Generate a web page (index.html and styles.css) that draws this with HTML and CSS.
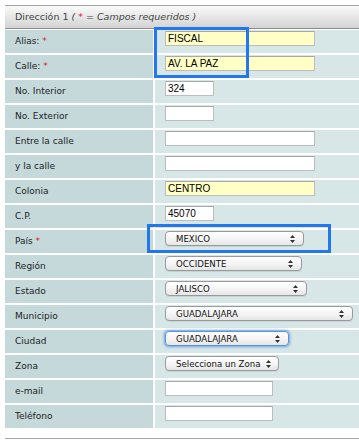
FILE: index.html
```html
<!DOCTYPE html>
<html lang="es">
<head>
  <meta charset="UTF-8">
  <link rel="stylesheet" href="styles.css">
  <title>Dirección</title>
</head>
<body>
<div class="address">
  <div class="address-head">
    Dirección 1 <em>( <span class="req">*</span> = Campos requeridos )</em>
  </div>

  <div class="fields">
    <div class="label">Alias: <span class="req">*</span></div>
    <div class="value"><input class="text wide required" type="text" value="FISCAL"></div>

    <div class="label">Calle: <span class="req">*</span></div>
    <div class="value"><input class="text wide required" type="text" value="AV. LA PAZ"></div>

    <div class="label">No. Interior</div>
    <div class="value"><input class="text short" type="text" value="324"></div>

    <div class="label">No. Exterior</div>
    <div class="value"><input class="text short" type="text" value=""></div>

    <div class="label">Entre la calle</div>
    <div class="value"><input class="text wide" type="text" value=""></div>

    <div class="label">y la calle</div>
    <div class="value"><input class="text wide" type="text" value=""></div>

    <div class="label">Colonia</div>
    <div class="value"><input class="text wide required" type="text" value="CENTRO"></div>

    <div class="label">C.P.</div>
    <div class="value"><input class="text short" type="text" value="45070"></div>

    <div class="label">País <span class="req">*</span></div>
    <div class="value">
      <div class="select w-pais"><span>MEXICO</span><svg class="arrows" width="5" height="8" viewBox="0 0 5 8"><path d="M2.5 0L5 3H0z M0 5h5L2.5 8z" fill="#333"/></svg></div>
    </div>

    <div class="label">Región</div>
    <div class="value">
      <div class="select w-region"><span>OCCIDENTE</span><svg class="arrows" width="5" height="8" viewBox="0 0 5 8"><path d="M2.5 0L5 3H0z M0 5h5L2.5 8z" fill="#333"/></svg></div>
    </div>

    <div class="label">Estado</div>
    <div class="value">
      <div class="select w-estado"><span>JALISCO</span><svg class="arrows" width="5" height="8" viewBox="0 0 5 8"><path d="M2.5 0L5 3H0z M0 5h5L2.5 8z" fill="#333"/></svg></div>
    </div>

    <div class="label">Municipio</div>
    <div class="value">
      <div class="select w-municipio"><span>GUADALAJARA</span><svg class="arrows" width="5" height="8" viewBox="0 0 5 8"><path d="M2.5 0L5 3H0z M0 5h5L2.5 8z" fill="#333"/></svg></div>
    </div>

    <div class="label">Ciudad</div>
    <div class="value">
      <div class="select w-ciudad focused"><span>GUADALAJARA</span><svg class="arrows" width="5" height="8" viewBox="0 0 5 8"><path d="M2.5 0L5 3H0z M0 5h5L2.5 8z" fill="#333"/></svg></div>
    </div>

    <div class="label">Zona</div>
    <div class="value">
      <div class="select w-zona"><span>Selecciona un Zona</span><svg class="arrows" width="5" height="8" viewBox="0 0 5 8"><path d="M2.5 0L5 3H0z M0 5h5L2.5 8z" fill="#333"/></svg></div>
    </div>

    <div class="label">e-mail</div>
    <div class="value"><input class="text mid" type="text" value=""></div>

    <div class="label">Teléfono</div>
    <div class="value"><input class="text mid" type="text" value=""></div>
  </div>

  <div class="address-foot"></div>

  <!-- annotation boxes drawn over the form -->
  <div class="mark mark-calle"></div>
  <div class="mark mark-pais"></div>
</div>
</body>
</html>
```

FILE: styles.css
```css
body {
  margin: 0;
  background: #fff;
  overflow: hidden;
  font-family: "DejaVu Sans", sans-serif;
  font-size: 9px;
  color: #222;
}

.address {
  position: relative;
  margin: 5px 0 0 5px;
  width: 354px;
}

.address-head {
  height: 22px;
  line-height: 22px;
  padding-left: 10px;
  border-top: 1px solid #a4a4a4;
  border-bottom: 1px solid #8c8c8c;
  background: linear-gradient(#fafafa, #d3d3d3);
  color: #444;
  font-size: 9.5px;
  white-space: nowrap;
}

.address-head em {
  font-style: italic;
}

.req {
  color: #e01818;
}

.fields {
  display: grid;
  grid-template-columns: 148px 1fr;
  grid-auto-rows: 23px;
  gap: 2px;
  margin-top: 1px;
}

.label {
  padding-left: 10px;
  line-height: 23px;
  white-space: nowrap;
  background: #c5d9db;
}

.value {
  padding: 1px 0 0 10px;
  background: #d7e6e6;
}

.text {
  box-sizing: border-box;
  display: block;
  height: 15px;
  margin: 0;
  padding: 0 2px;
  border: 1px solid #bdbdbd;
  border-top-color: #a8a8a8;
  background: #fff;
  font-family: "Liberation Sans", Arial, sans-serif;
  font-size: 10px;
  color: #000;
}

.text.required {
  background: #ffffc6;
}

.wide { width: 150px; }
.short { width: 49px; }
.mid { width: 108px; }

.select {
  box-sizing: border-box;
  display: flex;
  align-items: center;
  justify-content: space-between;
  height: 15px;
  padding: 0 8px 0 10px;
  border: 1px solid #9a9a9a;
  border-radius: 4px;
  background: linear-gradient(#ffffff, #f4f4f4 55%, #e6e6e6);
  box-shadow: 0 1px 0 rgba(0, 0, 0, 0.08);
  color: #111;
  font-size: 8.6px;
  white-space: nowrap;
}

.select.focused {
  border-color: #5e93d6;
  box-shadow: 0 0 0 1px #8db6ea, 0 0 2px 2px rgba(90, 150, 230, 0.35);
}

.arrows {
  flex: none;
  margin-left: 6px;
}

.w-pais { width: 139px; }
.w-region { width: 137px; }
.w-estado { width: 142px; }
.w-municipio { width: 188px; }
.w-ciudad { width: 124px; }
.w-zona { width: 114px; }

.address-foot {
  margin-top: 10px;
  border-top: 1px solid #a4a4a4;
}

.mark {
  position: absolute;
  box-sizing: border-box;
  border: 3px solid #2277ee;
}

.mark-calle {
  left: 149px;
  top: 22px;
  width: 95px;
  height: 51px;
}

.mark-pais {
  left: 142px;
  top: 219px;
  width: 184px;
  height: 29px;
}
```
